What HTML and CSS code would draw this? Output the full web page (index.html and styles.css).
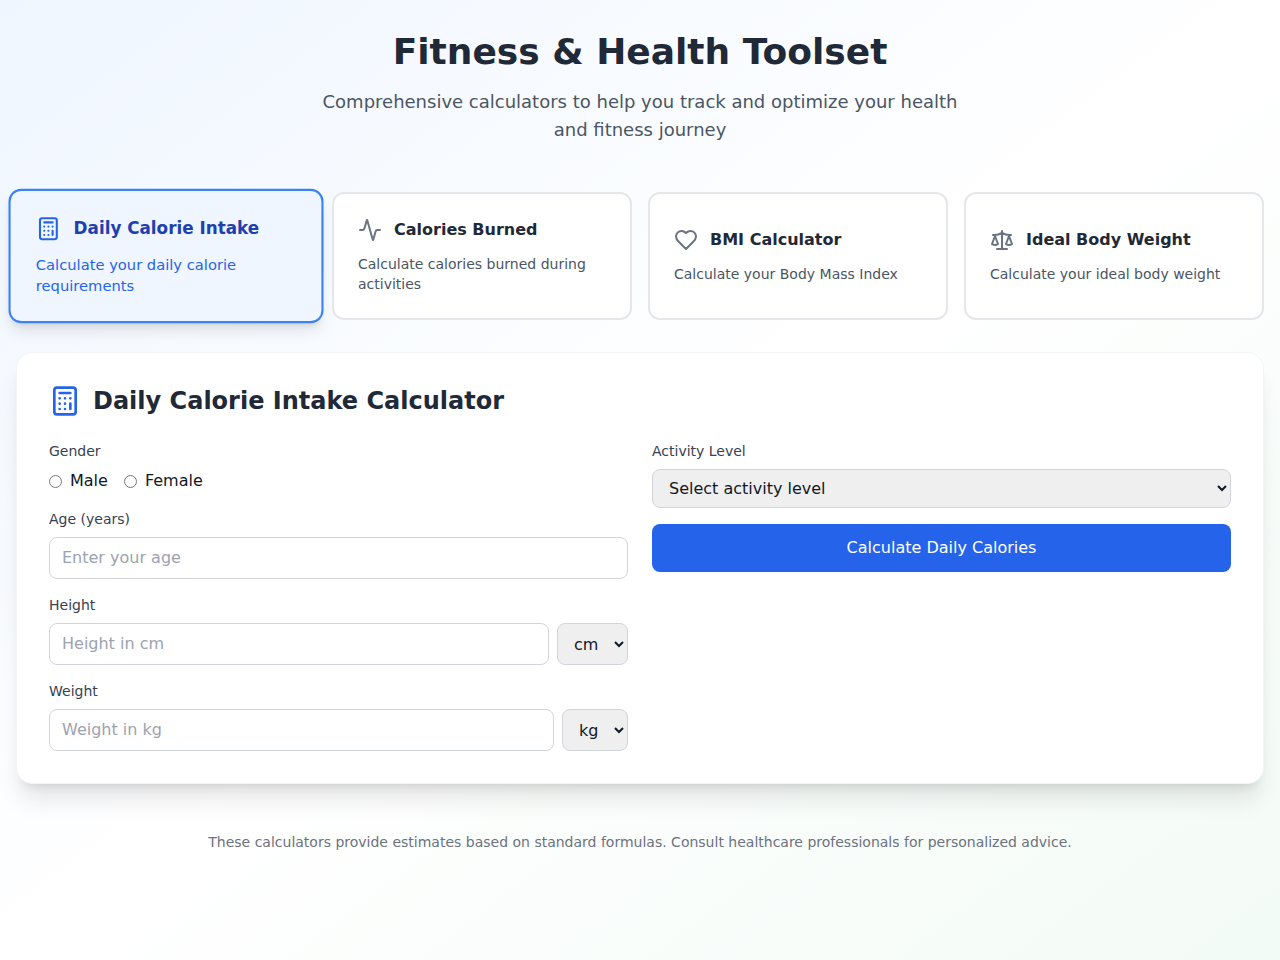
FILE: index.html
```html
<!DOCTYPE html>
<html lang="en">
	<head>
		<meta charset="utf-8">
		<title>Fitness & Health Toolset</title>
		<meta name="viewport" content="width=device-width, initial-scale=1">
		<link rel="stylesheet" href="styles.css">
	</head>
	<body>
		<div class="container">
			<header class="header">
				<h1>Fitness &amp; Health Toolset</h1>
				<p>Comprehensive calculators to help you track and optimize your health and fitness journey</p>
			</header>

			<nav class="tools">
				<button type="button" class="tool active">
					<span class="tool-head">
						<svg class="icon" viewBox="0 0 24 24">
							<rect x="4" y="2" width="16" height="20" rx="2" />
							<path d="M8 6h8M16 14v4M16 10h.01M12 10h.01M8 10h.01M12 14h.01M8 14h.01M12 18h.01M8 18h.01" />
						</svg>
						<span class="tool-name">Daily Calorie Intake</span>
					</span>
					<span class="tool-text">Calculate your daily calorie requirements</span>
				</button>

				<button type="button" class="tool">
					<span class="tool-head">
						<svg class="icon" viewBox="0 0 24 24">
							<path d="M22 12h-2.48a2 2 0 0 0-1.93 1.46l-2.35 8.36a.25.25 0 0 1-.48 0L9.24 2.18a.25.25 0 0 0-.48 0l-2.35 8.36A2 2 0 0 1 4.49 12H2" />
						</svg>
						<span class="tool-name">Calories Burned</span>
					</span>
					<span class="tool-text">Calculate calories burned during activities</span>
				</button>

				<button type="button" class="tool">
					<span class="tool-head">
						<svg class="icon" viewBox="0 0 24 24">
							<path d="M19 14c1.49-1.46 3-3.21 3-5.5A5.5 5.5 0 0 0 16.5 3c-1.76 0-3 .5-4.5 2-1.5-1.5-2.74-2-4.5-2A5.5 5.5 0 0 0 2 8.5c0 2.3 1.5 4.05 3 5.5l7 7Z" />
						</svg>
						<span class="tool-name">BMI Calculator</span>
					</span>
					<span class="tool-text">Calculate your Body Mass Index</span>
				</button>

				<button type="button" class="tool">
					<span class="tool-head">
						<svg class="icon" viewBox="0 0 24 24">
							<path d="m16 16 3-8 3 8c-.87.65-1.92 1-3 1s-2.13-.35-3-1Z" />
							<path d="m2 16 3-8 3 8c-.87.65-1.92 1-3 1s-2.13-.35-3-1Z" />
							<path d="M7 21h10M12 3v18M3 7h2c2 0 5-1 7-2 2 1 5 2 7 2h2" />
						</svg>
						<span class="tool-name">Ideal Body Weight</span>
					</span>
					<span class="tool-text">Calculate your ideal body weight</span>
				</button>
			</nav>

			<main class="panel">
				<div class="panel-head">
					<svg class="icon" viewBox="0 0 24 24">
						<rect x="4" y="2" width="16" height="20" rx="2" />
						<path d="M8 6h8M16 14v4M16 10h.01M12 10h.01M8 10h.01M12 14h.01M8 14h.01M12 18h.01M8 18h.01" />
					</svg>
					<h2>Daily Calorie Intake Calculator</h2>
				</div>

				<form class="form">
					<div class="column">
						<fieldset class="field">
							<legend>Gender</legend>
							<div class="radios">
								<label><input type="radio" name="gender" value="male">Male</label>
								<label><input type="radio" name="gender" value="female">Female</label>
							</div>
						</fieldset>

						<div class="field">
							<label class="label" for="age">Age (years)</label>
							<input class="input" id="age" type="number" placeholder="Enter your age">
						</div>

						<div class="field">
							<label class="label" for="height">Height</label>
							<div class="with-unit">
								<input class="input" id="height" type="number" placeholder="Height in cm">
								<select class="select" aria-label="Height unit">
									<option>cm</option>
									<option>ft</option>
								</select>
							</div>
						</div>

						<div class="field">
							<label class="label" for="weight">Weight</label>
							<div class="with-unit">
								<input class="input" id="weight" type="number" placeholder="Weight in kg">
								<select class="select" aria-label="Weight unit">
									<option>kg</option>
									<option>lb</option>
								</select>
							</div>
						</div>
					</div>

					<div class="column">
						<div class="field">
							<label class="label" for="activity">Activity Level</label>
							<select class="select wide" id="activity">
								<option>Select activity level</option>
								<option>Sedentary</option>
								<option>Lightly active</option>
								<option>Moderately active</option>
								<option>Very active</option>
							</select>
						</div>

						<button type="button" class="submit">Calculate Daily Calories</button>
					</div>
				</form>
			</main>

			<footer class="footer">
				<p>These calculators provide estimates based on standard formulas. Consult healthcare professionals for personalized advice.</p>
			</footer>
		</div>
	</body>
</html>
```
FILE: styles.css
```css
* {
	box-sizing: border-box;
}

body {
	margin: 0;
	min-height: 100vh;

	background: linear-gradient(to bottom right, #eff6ff, #ffffff, #f3fbf6);

	font-family: "DejaVu Sans", sans-serif;
	font-size: 16px;
	line-height: 24px;
	color: #111827;
}

h1, h2, p {
	margin: 0;
}

button, input, select {
	font-family: inherit;
	font-size: 16px;
	color: inherit;
}

.container {
	max-width: 1280px;
	margin: 0 auto;
	padding: 32px 16px;
}

.header {
	text-align: center;
	margin-bottom: 48px;
}

.header h1 {
	font-size: 36px;
	line-height: 40px;
	color: #1f2937;
	margin-bottom: 16px;
}

.header p {
	max-width: 672px;
	margin: 0 auto;
	font-size: 18px;
	line-height: 28px;
	color: #4b5563;
}

.icon {
	width: 24px;
	height: 24px;
	flex-shrink: 0;
	fill: none;
	stroke: currentColor;
	stroke-width: 2;
	stroke-linecap: round;
	stroke-linejoin: round;
}

/* calculator picker */

.tools {
	display: grid;
	grid-template-columns: repeat(4, 1fr);
	gap: 16px;
	margin-bottom: 32px;
}

.tool {
	padding: 24px;
	border: 2px solid #e5e7eb;
	border-radius: 12px;
	background-color: #fff;
	text-align: left;
	cursor: pointer;
}

.tool-head {
	display: flex;
	align-items: center;
	gap: 12px;
	margin-bottom: 12px;
	color: #6b7280;
}

.tool-name {
	font-weight: 600;
	line-height: 24px;
	color: #1f2937;
}

.tool-text {
	display: block;
	font-size: 14px;
	line-height: 20px;
	color: #4b5563;
}

.tool.active {
	border-color: #3b82f6;
	background-color: #eff6ff;
	box-shadow: 0 10px 15px -3px rgba(0, 0, 0, 0.1), 0 4px 6px -4px rgba(0, 0, 0, 0.1);
	transform: scale(1.05);
}

.tool.active .tool-head,
.tool.active .tool-text {
	color: #2563eb;
}

.tool.active .tool-name {
	color: #1e40af;
}

/* calculator */

.panel {
	padding: 32px;
	border: 1px solid #f3f4f6;
	border-radius: 16px;
	background-color: #fff;
	box-shadow: 0 20px 25px -5px rgba(0, 0, 0, 0.1), 0 8px 10px -6px rgba(0, 0, 0, 0.1);
}

.panel-head {
	display: flex;
	align-items: center;
	gap: 12px;
	margin-bottom: 24px;
}

.panel-head .icon {
	width: 32px;
	height: 32px;
	color: #2563eb;
}

.panel-head h2 {
	font-size: 24px;
	line-height: 32px;
	color: #1f2937;
}

.form {
	display: grid;
	grid-template-columns: 1fr 1fr;
	gap: 24px;
}

.column {
	display: flex;
	flex-direction: column;
	gap: 16px;
}

.field {
	margin: 0;
	padding: 0;
	border: none;
}

.label, legend {
	display: block;
	padding: 0;
	margin-bottom: 8px;
	font-size: 14px;
	line-height: 20px;
	color: #374151;
}

.radios {
	display: flex;
	gap: 16px;
}

.radios input {
	margin: 0 8px 0 0;
	vertical-align: -2px;
}

.input {
	display: block;
	width: 100%;
	padding: 8px 12px;
	border: 1px solid #d1d5db;
	border-radius: 8px;
	background-color: #fff;
	line-height: 24px;
}

.input::placeholder {
	color: #9ca3af;
}

.with-unit {
	display: flex;
	gap: 8px;
}

.with-unit .input {
	flex: 1;
	min-width: 0;
}

.select {
	padding: 8px 12px;
	border: 1px solid #d1d5db;
	border-radius: 8px;
	background-color: #efefef;
}

.select.wide {
	display: block;
	width: 100%;
}

.submit {
	padding: 12px 16px;
	border: none;
	border-radius: 8px;
	background-color: #2563eb;
	line-height: 24px;
	color: #fff;
	cursor: pointer;
}

.footer {
	margin-top: 48px;
	text-align: center;
	font-size: 14px;
	line-height: 20px;
	color: #6b7280;
}
```
